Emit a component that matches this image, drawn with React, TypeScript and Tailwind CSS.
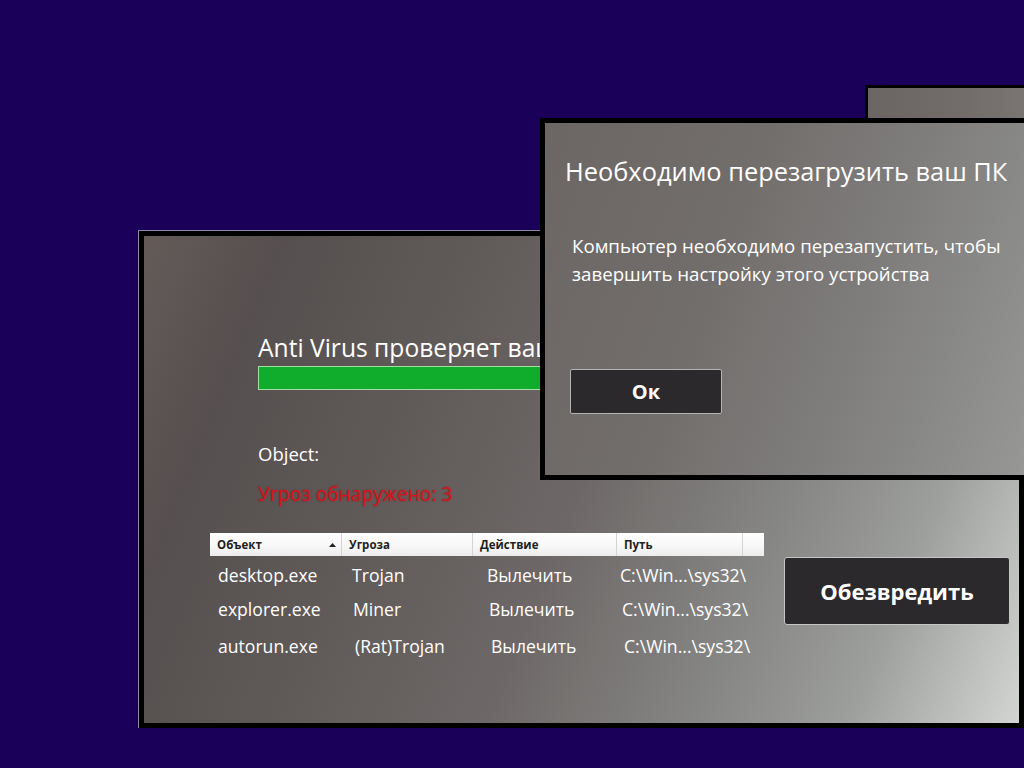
import React from 'react';

const font = { fontFamily: '"Open Sans", "Noto Sans", sans-serif' };

const columns = [
  { label: 'Объект', width: 'w-[132px]', sort: true },
  { label: 'Угроза', width: 'w-[131px]' },
  { label: 'Действие', width: 'w-[144px]' },
  { label: 'Путь', width: 'w-[126px]' },
];

const rows = [
  {
    cells: ['desktop.exe', 'Trojan', 'Вылечить', 'C:\\Win...\\sys32\\'],
    widths: ['w-[134px]', 'w-[135px]', 'w-[133px]'],
    top: 'mt-[7px]',
  },
  {
    cells: ['explorer.exe', 'Miner', 'Вылечить', 'C:\\Win...\\sys32\\'],
    widths: ['w-[135px]', 'w-[136px]', 'w-[133px]'],
    top: 'mt-[10px]',
  },
  {
    cells: ['autorun.exe', '(Rat)Trojan', 'Вылечить', 'C:\\Win...\\sys32\\'],
    widths: ['w-[137px]', 'w-[136px]', 'w-[133px]'],
    top: 'mt-[13px]',
  },
];

function ThreatTable() {
  return (
    <div className="w-[554px]">
      {/* header */}
      <div className="flex h-[23px] bg-[linear-gradient(180deg,#ffffff_0%,#f7f7f7_60%,#ececec_100%)] text-[11.5px] font-bold text-[#1e1e1e]">
        {columns.map((c) => (
          <div
            key={c.label}
            className={`${c.width} flex items-center justify-between border-r border-[#d4d4d4] pl-[7px] pr-[5px]`}
          >
            <span>{c.label}</span>
            {c.sort && (
              <svg width="7" height="4" viewBox="0 0 7 4">
                <path d="M0 4 L3.5 0 L7 4 Z" fill="#222" />
              </svg>
            )}
          </div>
        ))}
        <div className="flex-1" />
      </div>

      {/* rows */}
      <div className="pl-[8px] text-[17.6px] leading-[24px] text-white">
        {rows.map((r, i) => (
          <div key={i} className={`flex ${r.top}`}>
            {r.cells.map((cell, j) => (
              <div key={j} className={r.widths[j] ?? 'flex-1 whitespace-nowrap'}>
                {cell}
              </div>
            ))}
          </div>
        ))}
      </div>
    </div>
  );
}

function ScanWindow() {
  return (
    <div className="absolute left-[138px] top-[230px] h-[498px] w-[886px] border-l border-t border-[#8e8a9e]">
      <div className="h-full w-full border-[5px] border-black">
        <div className="h-full w-full overflow-hidden bg-[linear-gradient(112deg,#645b59_0%,#564f4f_13%,#5f5958_30%,#6d6867_50%,#868684_70%,#9d9f9d_84%,#d3d5d3_100%)]">
          <div className="pl-[114px] pt-[97px]">
            <div className="whitespace-nowrap text-[24.6px] leading-[30px] text-white">
              Anti Virus проверяет ваш компьютер
            </div>
            <div className="mt-[3px] h-[24px] w-[460px] border border-[#a6dca6] bg-[#10ad2c]" />
            <div className="mt-[52px] text-[18.5px] leading-[24px] text-white">Object:</div>
            <div className="mt-[16px] text-[19.2px] leading-[24px] text-[#d5151d] [text-shadow:0_0_2px_rgba(150,0,0,0.6)]">
              Угроз обнаружено: 3
            </div>
          </div>

          <div className="mt-[27px] flex pl-[66px]">
            <ThreatTable />
            <button className="ml-[20px] mt-[24px] h-[68px] w-[226px] rounded-[3px] border border-[#c6c6c6] bg-[#2b292c] text-[22px] font-bold text-white">
              Обезвредить
            </button>
          </div>
        </div>
      </div>
    </div>
  );
}

function BackWindow() {
  return (
    <div className="absolute left-[865px] top-[85px] h-[60px] w-[170px] border-[3px] border-black">
      <div className="h-full w-full bg-[linear-gradient(90deg,#6b6563_0%,#726d6b_60%,#7a7674_100%)]" />
    </div>
  );
}

function RestartDialog() {
  return (
    <div className="absolute left-[540px] top-[118px] h-[362px] w-[489px] border-[5px] border-black">
      <div className="h-full w-full bg-[linear-gradient(110deg,#6c6764_0%,#716d6b_35%,#7d7b7a_60%,#888887_80%,#979896_100%)]">
        <div className="pl-[20px] pt-[32px]">
          <div className="whitespace-nowrap text-[25.4px] leading-[32px] text-white">
            Необходимо перезагрузить ваш ПК
          </div>
          <div className="ml-[7px] mt-[45px] whitespace-nowrap text-[18.7px] leading-[28px] text-white">
            Компьютер необходимо перезапустить, чтобы
            <br />
            завершить настройку этого устройства
          </div>
          <button className="ml-[5px] mt-[81px] h-[45px] w-[152px] rounded-[2px] border border-[#b4b4b4] bg-[#2b292c] text-[20px] font-bold text-white">
            Ок
          </button>
        </div>
      </div>
    </div>
  );
}

export default function App() {
  return (
    <div className="relative h-[768px] w-[1024px] overflow-hidden bg-[#1a0058]" style={font}>
      <ScanWindow />
      <BackWindow />
      <RestartDialog />
    </div>
  );
}
